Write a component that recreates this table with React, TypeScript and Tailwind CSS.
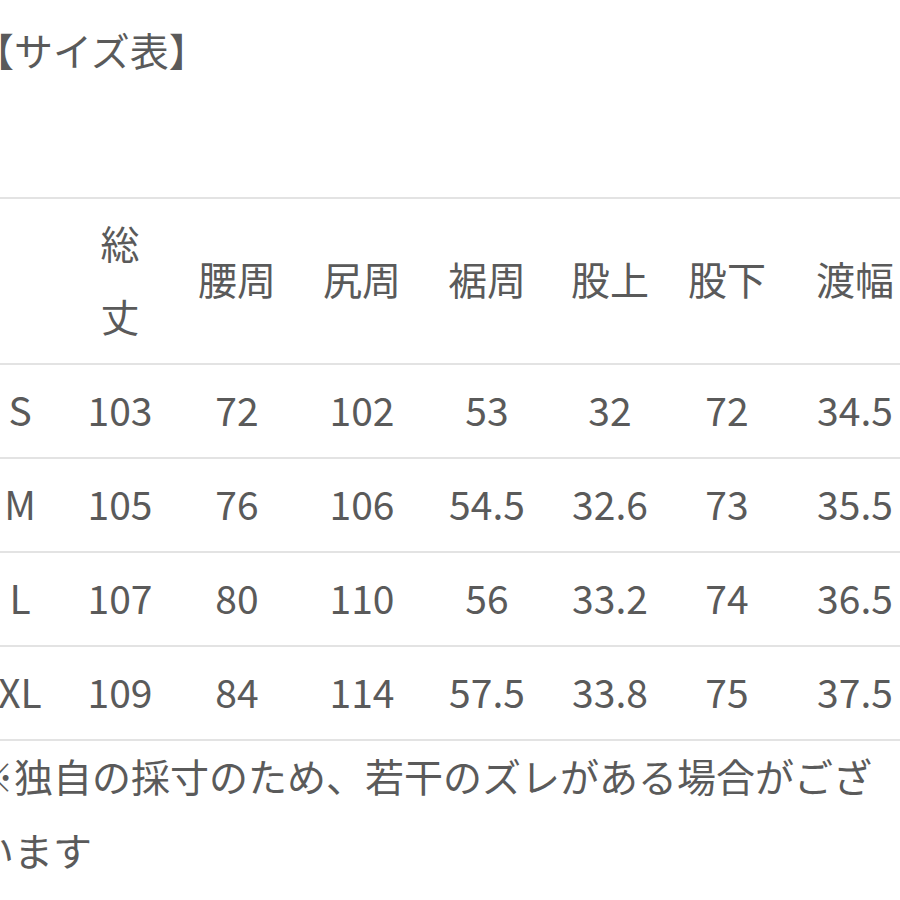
import React from "react";

const rows = [
  ["S", "103", "72", "102", "53", "32", "72", "34.5"],
  ["M", "105", "76", "106", "54.5", "32.6", "73", "35.5"],
  ["L", "107", "80", "110", "56", "33.2", "74", "36.5"],
  ["XL", "109", "84", "114", "57.5", "33.8", "75", "37.5"],
];

const headers = ["", "総丈", "腰周", "尻周", "裾周", "股上", "股下", "渡幅"];

export default function App() {
  return (
    <div
      className="w-[900px] h-[900px] overflow-hidden bg-white text-[#5a5a5a] text-[39px]"
      style={{ fontFamily: '"Noto Sans CJK JP", "Noto Sans", sans-serif' }}
    >
      <div className="ml-[-25px] w-[952px]">
        <div className="h-[197px] pt-[13px] leading-[72px]">【サイズ表】</div>
        <div className="border-t-2 border-[#e3e3e3]">
          <div className="grid grid-cols-[90px_110px_124px_126px_124px_122px_112px_144px] h-[166px] border-b-2 border-[#e3e3e3]">
            {headers.map((h, i) => (
              <div key={i} className="flex items-center justify-center leading-[73px] pb-[5px]">
                {i === 1 ? (
                  <div className="flex flex-col items-center">
                    <span>総</span>
                    <span>丈</span>
                  </div>
                ) : (
                  h
                )}
              </div>
            ))}
          </div>
          {rows.map((r, ri) => (
            <div
              key={ri}
              className="grid grid-cols-[90px_110px_124px_126px_124px_122px_112px_144px] h-[94px] border-b-2 border-[#e3e3e3]"
            >
              {r.map((c, ci) => (
                <div key={ci} className="flex items-center justify-center leading-[73px] pb-[4px]">
                  {c}
                </div>
              ))}
            </div>
          ))}
        </div>
        <div className="w-[930px] leading-[74px] mt-[-3px]">
          ※独自の採寸のため、若干のズレがある場合がございます
        </div>
      </div>
    </div>
  );
}
